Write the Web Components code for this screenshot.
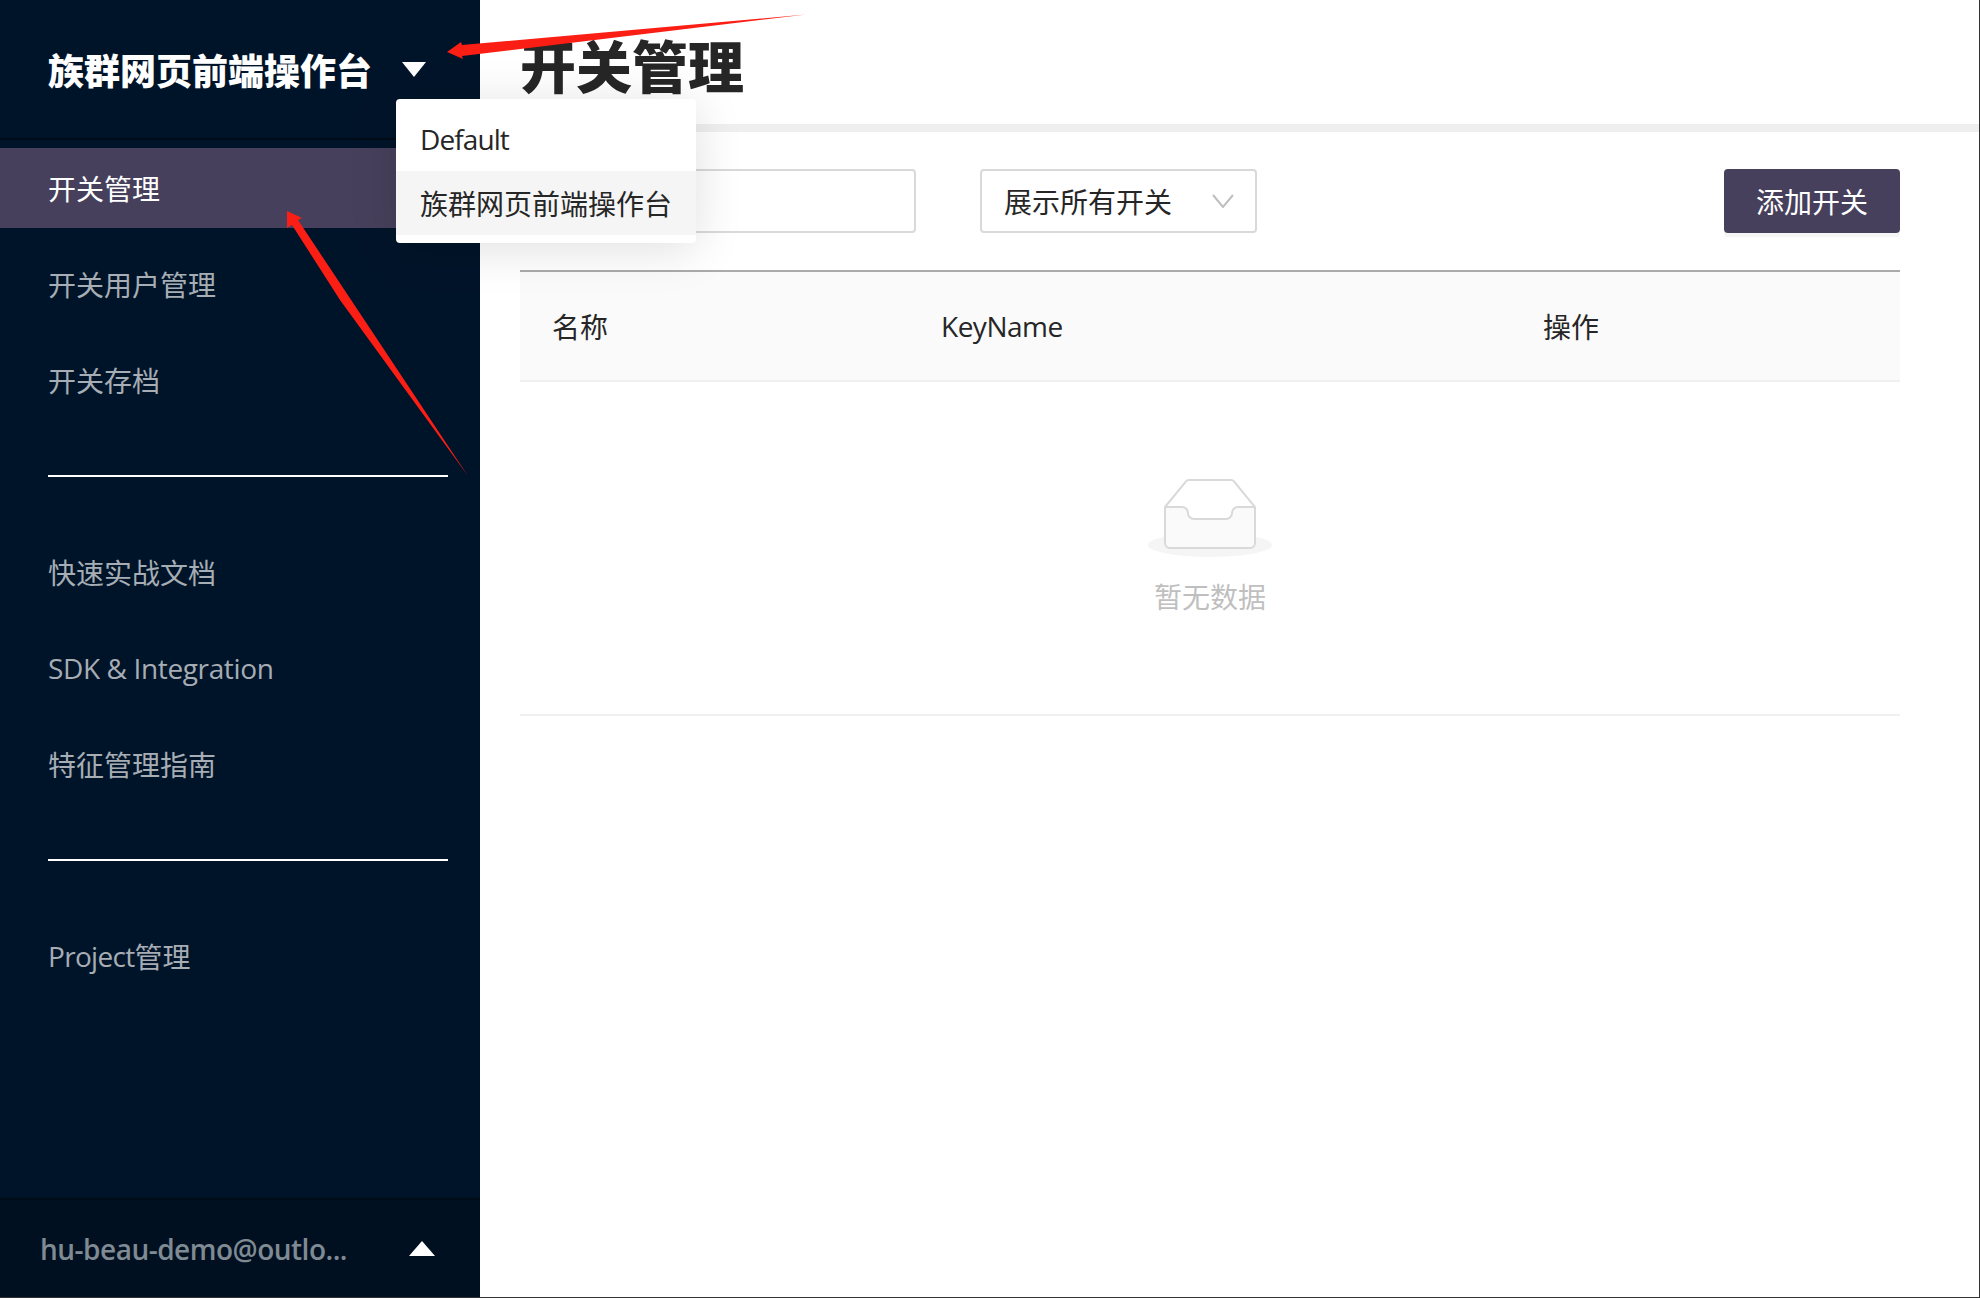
<!DOCTYPE html>
<html><head><meta charset="utf-8">
<style>
html,body{margin:0;padding:0;height:100%;background:#fff}
body{font-family:"Open Sans","Noto Sans CJK SC",sans-serif;overflow:hidden}
</style></head><body>
<app-shell>
  <side-bar slot="side">
    <span slot="title">族群网页前端操作台</span>
    <nav-group>
      <nav-item active>开关管理</nav-item>
      <nav-item>开关用户管理</nav-item>
      <nav-item>开关存档</nav-item>
    </nav-group>
    <nav-group>
      <nav-item>快速实战文档</nav-item>
      <nav-item><span style="letter-spacing:-.37px">SDK &amp; Integration</span></nav-item>
      <nav-item>特征管理指南</nav-item>
    </nav-group>
    <nav-group last>
      <nav-item><span style="letter-spacing:-.7px">Project</span>管理</nav-item>
    </nav-group>
    <span slot="user">hu-beau-demo@outlo...</span>
  </side-bar>
  <main-panel slot="main"></main-panel>
  <project-menu slot="over"></project-menu>
  <red-arrows slot="over"></red-arrows>
</app-shell>
<script>
const F='"Open Sans","Noto Sans CJK SC",sans-serif';
function def(name,html){
  customElements.define(name,class extends HTMLElement{
    constructor(){super();this.attachShadow({mode:'open'}).innerHTML=html;}
  });
}
def('app-shell',`<style>
:host{display:flex;position:relative;width:1980px;height:1298px;overflow:hidden;font-family:${F};box-sizing:border-box;border-right:1px solid #333;border-bottom:1px solid #333}
::slotted([slot=side]){flex:none}
::slotted([slot=main]){flex:1;min-width:0}
</style><slot name="side"></slot><slot name="main"></slot><slot name="over"></slot>`);
def('side-bar',`<style>
:host{display:flex;flex-direction:column;width:480px;height:100%;background:#001429;color:#fff}
header{height:138px;border-bottom:2px solid #000c17;display:flex;align-items:center;padding-left:48px;font-size:36px;font-weight:900;gap:30px;margin-bottom:8px}
.nav{flex:1}
footer{height:97px;border-top:2px solid #000c17;background:#001021;display:flex;align-items:center;padding:0 45px 0 40px;justify-content:space-between;font-size:28px;font-weight:600;color:#7f8a93;letter-spacing:-.5px}
</style>
<header><slot name="title"></slot><svg width="24" height="15" viewBox="0 0 24 15"><path d="M0 0H24L12 15Z" fill="#fff"/></svg></header>
<div class="nav"><slot></slot></div>
<footer><slot name="user"></slot><svg width="26" height="15" viewBox="0 0 26 15"><path d="M13 0L26 15H0Z" fill="#fff"/></svg></footer>`);
def('nav-group',`<style>
:host{display:block;margin:0 32px 55px 48px;padding-bottom:39px;border-bottom:2px solid #fff}
:host([last]){border:0}
.in{margin:0 -32px 0 -48px}
</style><div class="in"><slot></slot></div>`);
def('nav-item',`<style>
:host{display:flex;align-items:center;height:80px;margin-bottom:16px;padding-left:48px;font-size:28px;color:#a6adb4}
:host([active]){background:#47405c;color:#fff}
</style><slot></slot>`);
def('main-panel',`<style>
:host{display:block;background:#fff;color:#262626}
h1{margin:0;height:124px;box-sizing:border-box;padding:28px 0 0 40px;font-size:56px;line-height:76px;font-weight:900;color:#262626}
.band{height:8px;background:#efefef}
.tools{display:flex;align-items:center;padding:37px 79px 0 40px;height:64px;gap:64px}
.inp{width:396px;height:64px;box-sizing:border-box;border:2px solid #d9d9d9;border-radius:4px}
.sel{width:277px;height:64px;box-sizing:border-box;border:2px solid #d9d9d9;border-radius:4px;display:flex;align-items:center;justify-content:space-between;padding:0 21px 0 22px;font-size:28px}
.btn{margin-left:auto;width:176px;height:64px;border-radius:4px;background:#47405c;color:#fff;font-size:28px;display:flex;align-items:center;justify-content:center;box-shadow:0 4px 0 #f5f5f5}
.table{margin:37px 79px 0 40px;border-top:2px solid #aaa}
.thead{display:grid;grid-template-columns:389px 602px 1fr;height:108px;align-items:center;background:#fafafa;border-bottom:2px solid #f0f0f0;font-size:28px}
.thead span{padding-left:32px}
.thead .k{font-weight:500;letter-spacing:-.5px}
.empty{height:334px;border-bottom:2px solid #f0f0f0;display:flex;flex-direction:column;align-items:center;box-sizing:border-box;padding-top:97px;color:#bfbfbf;font-size:28px}
.empty div{margin-top:17px;line-height:42px}
</style>
<h1>开关管理</h1><div class="band"></div>
<div class="tools"><div class="inp"></div><div class="sel">展示所有开关<svg width="22" height="14" viewBox="0 0 22 14"><path d="M1 1L11 13L21 1" fill="none" stroke="#bfbfbf" stroke-width="2"/></svg></div><div class="btn">添加开关</div></div>
<div class="table"><div class="thead"><span>名称</span><span class="k">KeyName</span><span>操作</span></div>
<div class="empty"><svg width="124" height="80" viewBox="0 0 124 80"><ellipse cx="62" cy="66" rx="62" ry="12" fill="#f5f5f5"/><path d="M17 28V64a5 5 0 0 0 5 5H102a5 5 0 0 0 5-5V28H90a6 6 0 0 0-6 6a6 6 0 0 1-6 6H46a6 6 0 0 1-6-6a6 6 0 0 0-6-6Z" fill="#fafafa"/><path d="M17 28L38 2.500Q39 1 41 1H83Q85 1 86 2.500L107 28V64a5 5 0 0 1-5 5H22a5 5 0 0 1-5-5Z" fill="none" stroke="#d9d9d9" stroke-width="2"/><path d="M17 28H34a6 6 0 0 1 6 6a6 6 0 0 0 6 6H78a6 6 0 0 0 6-6a6 6 0 0 1 6-6H107" fill="none" stroke="#d9d9d9" stroke-width="2"/></svg><div>暂无数据</div></div></div>`);
def('project-menu',`<style>
:host{position:absolute;left:396px;top:99px;width:300px;height:144px;background:#fff;border-radius:4px;box-shadow:0 6px 48px rgba(0,0,0,.13);padding-top:8px;box-sizing:border-box;font-size:28px;color:#262626}
div{height:64px;display:flex;align-items:center;padding-left:24px}
.l{letter-spacing:-.9px}
.s{background:#f5f5f5}
</style><div class="l">Default</div><div class="s">族群网页前端操作台</div>`);
def('red-arrows',`<style>:host{position:absolute;left:0;top:0;width:1980px;height:1298px;pointer-events:none}svg{display:block}</style>
<svg width="1980" height="1298" viewBox="0 0 1980 1298"><path d="M806 14.500L462 45L461 42L447 52L463 59L462 56Z" fill="#fb1e14"/><path d="M468 476L298 220L302 218L287 211L287 228L292 225L340 300Z" fill="#fb1e14"/></svg>`);
</script>
</body></html>
